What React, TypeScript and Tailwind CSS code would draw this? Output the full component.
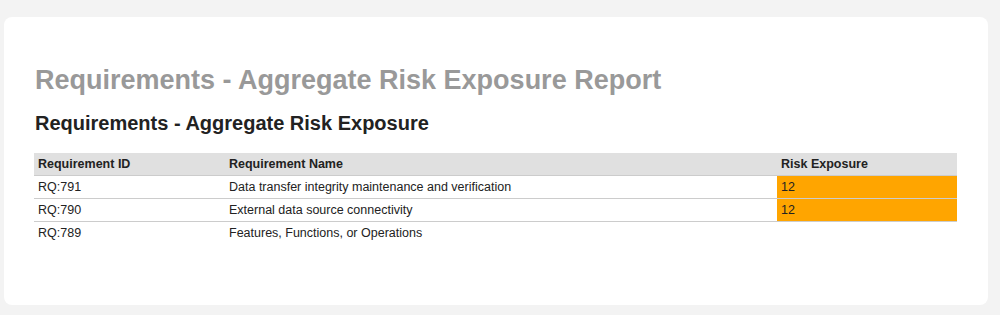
const rows = [
  { id: "RQ:791", name: "Data transfer integrity maintenance and verification", risk: 12 },
  { id: "RQ:790", name: "External data source connectivity", risk: 12 },
  { id: "RQ:789", name: "Features, Functions, or Operations", risk: null },
];

export default function App() {
  return (
    <div className="min-h-[315px] bg-[#f3f3f3] px-1 pt-[17px] pb-[10px] font-['Liberation_Sans',Arial,sans-serif]">
      <div className="h-[288px] w-[984px] rounded-lg bg-white px-[30px] pt-[48px]">
        <h1 className="text-[27px] leading-[31px] font-bold text-[#999999] pl-px">
          Requirements - Aggregate Risk Exposure Report
        </h1>
        <h2 className="mt-[16px] text-[20px] leading-[23px] font-bold text-[#222222] pl-px">
          Requirements - Aggregate Risk Exposure
        </h2>
        <table className="mt-[18px] w-[923px] border-collapse text-[12.5px] text-[#222222]">
          <thead>
            <tr className="h-[22px] bg-[#e0e0e0] border-b border-[#cccccc]">
              <th className="w-[191px] px-1 pt-[2px] text-left font-bold">Requirement ID</th>
              <th className="w-[552px] px-1 pt-[2px] text-left font-bold">Requirement Name</th>
              <th className="px-1 pt-[2px] text-left font-bold">Risk Exposure</th>
            </tr>
          </thead>
          <tbody>
            {rows.map((row, i) => (
              <tr
                key={row.id}
                className={`h-[23px] ${i < rows.length - 1 ? "border-b border-[#cccccc]" : ""}`}
              >
                <td className="px-1 pt-px">{row.id}</td>
                <td className="px-1 pt-px">{row.name}</td>
                <td className={`px-1 pt-px ${row.risk != null ? "bg-[#ffa500]" : ""}`}>{row.risk ?? ""}</td>
              </tr>
            ))}
          </tbody>
        </table>
      </div>
    </div>
  );
}
